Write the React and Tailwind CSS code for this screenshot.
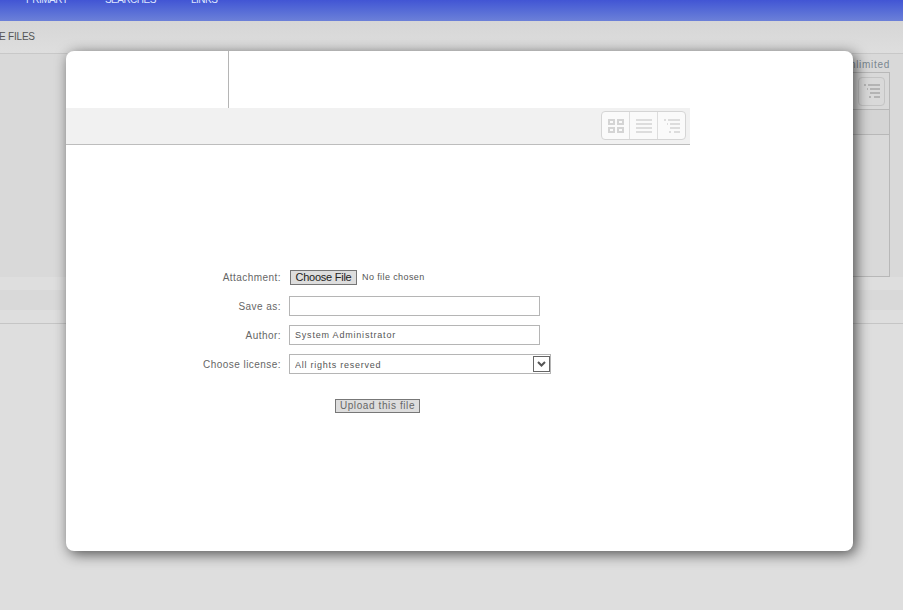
import React from 'react';

const GridIcon = () => (
  <svg width="16" height="14" viewBox="0 0 16 14" fill="none" stroke="#d4d4d4" strokeWidth="2">
    <rect x="1" y="1" width="5" height="4" />
    <rect x="10" y="1" width="5" height="4" />
    <rect x="1" y="9" width="5" height="4" />
    <rect x="10" y="9" width="5" height="4" />
  </svg>
);

const LinesIcon = () => (
  <svg width="16" height="14" viewBox="0 0 16 14" fill="none" stroke="#d4d4d4" strokeWidth="1.5">
    <path d="M0 1h16M0 5h16M0 9h16M0 13h16" />
  </svg>
);

const TreeIcon = ({ color = '#d4d4d4' }) => (
  <svg width="16" height="14" viewBox="0 0 16 14" fill="none" stroke={color} strokeWidth="1.5">
    <path d="M0 1h2M4 1h12M3 5h1M6 5h10M6 9h10M5 13h2M10 13h6" />
  </svg>
);

const ViewButtons = () => (
  <div className="flex h-[29px] w-[85px] rounded-[4px] border border-[#d5d5d5] bg-[#fafafa]">
    <div className="flex flex-1 items-center justify-center border-r border-[#dddddd]"><GridIcon /></div>
    <div className="flex flex-1 items-center justify-center border-r border-[#dddddd]"><LinesIcon /></div>
    <div className="flex flex-1 items-center justify-center"><TreeIcon /></div>
  </div>
);

const Label = ({ children }) => (
  <div className="w-[223px] pr-[8px] text-right text-[10px] tracking-[0.45px] text-[#666666]">{children}</div>
);

const UploadForm = () => (
  <div className="flex flex-col pt-[122px] font-['Liberation_Sans',sans-serif]">
    <div className="flex h-[20px] items-center">
      <Label>Attachment:</Label>
      <button className="ml-[1px] h-[15px] w-[67px] border border-[#767676] bg-[#dddddd] text-[11px] leading-[12px] tracking-[-0.25px] text-[#222222]">Choose File</button>
      <span className="mt-[1px] ml-[5px] text-[9px] tracking-[0.4px] text-[#555555]">No file chosen</span>
    </div>
    <div className="mt-[9px] flex h-[20px] items-center">
      <Label>Save as:</Label>
      <input className="h-[20px] w-[251px] border border-[#b5b5b5] bg-white px-[5px] text-[9px]" />
    </div>
    <div className="mt-[9px] flex h-[20px] items-center">
      <Label>Author:</Label>
      <input readOnly value="System Administrator" className="h-[20px] w-[251px] border border-[#b5b5b5] bg-white px-[5px] text-[9px] tracking-[0.8px] text-[#555555]" />
    </div>
    <div className="mt-[9px] flex h-[20px] items-center">
      <Label>Choose license:</Label>
      <div className="relative h-[20px] w-[262px]">
        <select className="block h-[20px] w-full appearance-none border border-[#b5b5b5] bg-white px-[5px] pt-[3px] text-[9px] tracking-[0.75px] text-[#555555]">
          <option>All rights reserved</option>
        </select>
        <div className="absolute top-[2px] right-[1px] flex h-[16px] w-[17px] items-center justify-center border border-[#666666] bg-white">
          <svg width="9" height="6" viewBox="0 0 9 6" fill="none" stroke="#555555" strokeWidth="2">
            <path d="M1 1l3.5 3.5L8 1" />
          </svg>
        </div>
      </div>
    </div>
    <div className="mt-[18px] pl-[269px]">
      <button className="h-[14px] w-[85px] border border-[#777777] bg-[#dddddd] text-[10px] leading-[12px] tracking-[0.6px] text-[#666666]">Upload this file</button>
    </div>
  </div>
);

const App = () => {
  return (
    <div className="relative h-[610px] w-full overflow-hidden bg-[#dedede] font-['Liberation_Sans',sans-serif]">
      {/* page behind the dialog */}
      <div className="flex h-[21px] overflow-hidden bg-gradient-to-b from-[#4255d4] to-[#6c80d8] pl-[26px] text-[10px] leading-[14px] tracking-[-0.5px] text-[#dfe6ff]">
        <span className="mt-[-7px]">PRIMARY</span>
        <span className="mt-[-7px] ml-[37px]">SEARCHES</span>
        <span className="mt-[-7px] ml-[35px]">LINKS</span>
      </div>
      <div className="flex h-[33px] items-center border-b border-[#c8c8c8] bg-gradient-to-b from-[#d6d6d6] to-[#dedede] text-[10px] text-[#555555]">
        <span className="mt-[-2px] -ml-[1px] tracking-[-0.2px]">E FILES</span>
      </div>
      <div className="h-[223px] bg-[#d9d9d9] pr-[13px]">
        <div className="flex h-full flex-col items-end">
          <div className="h-[18px] pt-[5px] text-[10px] leading-[12px] tracking-[0.7px] text-[#7a8790]">unlimited</div>
          <div className="flex h-[205px] w-[60px] flex-col border-t border-r border-b border-[#b8b8b8]">
            <div className="flex h-[37px] items-center justify-end border-b border-[#b8b8b8] pr-[4px]">
              <div className="flex h-[29px] w-[27px] items-center justify-center rounded-[4px] border border-[#c4c4c4]"><TreeIcon color="#a8a8a8" /></div>
            </div>
            <div className="h-[25px] border-b border-[#b8b8b8] bg-[#d4d4d4]" />
          </div>
        </div>
      </div>
      <div className="h-[13px] bg-[#dedede]" />
      <div className="h-[20px] bg-[#d9d9d9]" />
      <div className="h-[14px] border-b border-[#c5c5c5] bg-[#dedede]" />

      {/* dialog */}
      <div className="absolute top-[51px] left-[66px] h-[500px] w-[787px] rounded-[8px] bg-white shadow-[3px_3px_14px_rgba(0,0,0,0.65)]">
        <div className="h-[57px] w-[163px] border-r border-[#b5b5b5]" />
        <div className="flex h-[37px] w-[624px] items-start justify-end border-b border-[#bdbdbd] bg-[#f1f1f1] pt-[3px] pr-[4px]">
          <ViewButtons />
        </div>
        <UploadForm />
      </div>
    </div>
  );
};

export default App;
